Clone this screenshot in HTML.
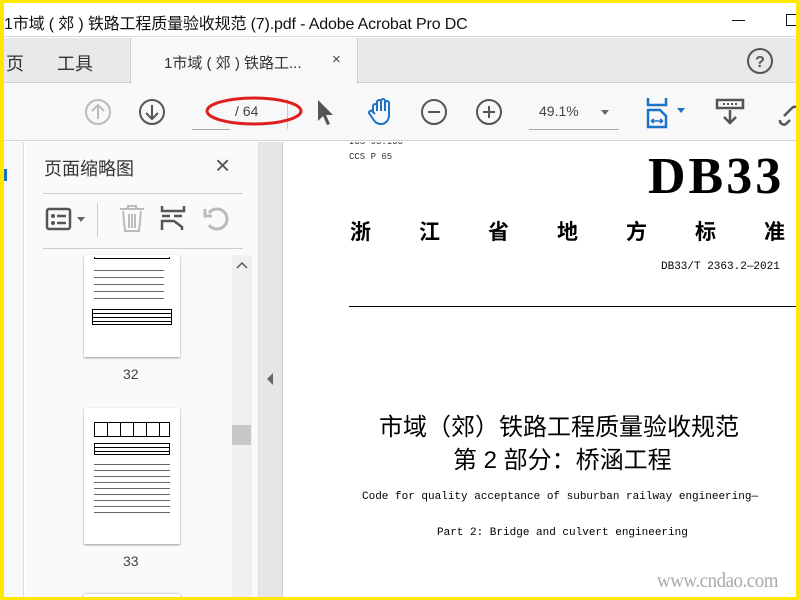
<!DOCTYPE html>
<html><head><meta charset="utf-8"><style>
*{margin:0;padding:0;box-sizing:border-box}
body{width:800px;height:600px;overflow:hidden;background:#ffe800;position:relative;font-family:"Liberation Sans","Noto Sans CJK SC",sans-serif}
.a{position:absolute}
.cjk{font-family:"Liberation Sans","Noto Sans CJK SC",sans-serif}
.mono{font-family:"Liberation Mono","Noto Sans CJK SC",monospace}
</style></head><body>
<div class="a" style="left:4px;top:3px;width:792px;height:594px;background:#fff;overflow:hidden">
 <div class="a" style="left:0;top:0;width:792px;height:34px;background:#fff;border-bottom:1px solid #d8d8d8"></div>
 <div class="a cjk" style="left:0;top:7px;font-size:16px;color:#111;white-space:nowrap;letter-spacing:-0.15px">1市域 ( 郊 ) 铁路工程质量验收规范 (7).pdf - Adobe Acrobat Pro DC</div>
 <div class="a" style="left:728px;top:17px;width:13px;height:1px;background:#111"></div>
 <div class="a" style="left:782px;top:11px;width:12px;height:12px;border:1px solid #111"></div>
 <div class="a" style="left:0;top:35px;width:792px;height:45px;background:#e9e9e9;border-bottom:1px solid #cfcfcf"></div>
 <div class="a cjk" style="left:2px;top:47px;font-size:18px;color:#333">页</div>
 <div class="a cjk" style="left:53px;top:47px;font-size:18px;color:#333">工具</div>
 <div class="a" style="left:126px;top:35px;width:228px;height:46px;background:#f8f8f8;border-left:1px solid #cfcfcf;border-right:1px solid #cfcfcf"></div>
 <div class="a cjk" style="left:160px;top:49px;font-size:15px;color:#333;white-space:nowrap">1市域 ( 郊 ) 铁路工...</div>
 <div class="a" style="left:328px;top:48px;font-size:15px;color:#444">×</div>
 <svg class="a" style="left:742px;top:44px" width="28" height="28"><circle cx="14" cy="14" r="12" fill="none" stroke="#555" stroke-width="2"/><text x="14" y="20" font-size="16" font-weight="bold" text-anchor="middle" fill="#555" font-family="Liberation Sans">?</text></svg>
 <div class="a" style="left:0;top:81px;width:792px;height:57px;background:#f8f8f8;border-bottom:1px solid #d4d4d4"></div>
 <svg class="a" style="left:80px;top:95px" width="28" height="28"><circle cx="14" cy="14" r="12" fill="none" stroke="#bbb" stroke-width="2"/><path d="M14 21V8M8 13l6-6 6 6" fill="none" stroke="#bbb" stroke-width="2"/></svg>
 <svg class="a" style="left:134px;top:95px" width="28" height="28"><circle cx="14" cy="14" r="12" fill="none" stroke="#555" stroke-width="2"/><path d="M14 7v13M8 15l6 6 6-6" fill="none" stroke="#555" stroke-width="2"/></svg>
 <div class="a" style="left:188px;top:126px;width:38px;height:1px;background:#aaa"></div>
 <div class="a" style="left:231px;top:100px;font-size:14px;color:#444">/ 64</div>
 <div class="a" style="left:283px;top:96px;width:1px;height:30px;background:#ccc"></div>
 <svg class="a" style="left:200px;top:88px" width="104" height="40"><ellipse cx="50" cy="20" rx="47" ry="13" fill="none" stroke="#e02020" stroke-width="3"/></svg>
 <svg class="a" style="left:310px;top:94px" width="22" height="30"><path d="M4 3v21l5-5 4 9 3-1-4-9h7z" fill="#555"/></svg>
 <svg class="a" style="left:362px;top:94px" width="30" height="30"><path d="M7 15V9a2 2 0 014 0v5V5a2 2 0 014 0v9V4a2 2 0 014 0v10V6a2 2 0 014 0v12c0 6-4 9-8 9s-6-2-8-5l-4-6a2 2 0 013-2l3 3" fill="none" stroke="#1a73c8" stroke-width="2"/></svg>
 <svg class="a" style="left:416px;top:95px" width="28" height="28"><circle cx="14" cy="14" r="12" fill="none" stroke="#555" stroke-width="2"/><path d="M8 14h12" stroke="#555" stroke-width="2"/></svg>
 <svg class="a" style="left:471px;top:95px" width="28" height="28"><circle cx="14" cy="14" r="12" fill="none" stroke="#555" stroke-width="2"/><path d="M8 14h12M14 8v12" stroke="#555" stroke-width="2"/></svg>
 <div class="a" style="left:535px;top:100px;font-size:14px;color:#444">49.1%</div>
 <div class="a" style="left:597px;top:107px;width:0;height:0;border-left:4px solid transparent;border-right:4px solid transparent;border-top:5px solid #666"></div>
 <div class="a" style="left:525px;top:126px;width:90px;height:1px;background:#aaa"></div>
 <svg class="a" style="left:642px;top:94px" width="42" height="32"><path d="M2 1v7h18V1M2 30V13h12l6 6v11z" fill="none" stroke="#1a73c8" stroke-width="2.5"/><path d="M5 24h12M5 24l3-2M5 24l3 2M17 24l-3-2M17 24l-3 2" stroke="#1a73c8" stroke-width="1.5"/><path d="M31 11h8l-4 5z" fill="#1a73c8"/></svg>
 <svg class="a" style="left:710px;top:95px" width="32" height="30"><rect x="3" y="2" width="26" height="8" fill="none" stroke="#555" stroke-width="2.5"/><path d="M9 6h2M13 6h2M17 6h2M21 6h2" stroke="#555" stroke-width="2"/><path d="M16 12v13M10 19l6 6 6-6" fill="none" stroke="#555" stroke-width="2.5"/></svg>
 <svg class="a" style="left:774px;top:95px" width="18" height="30"><path d="M6 18l8-8a4 4 0 016 6M2 22a4 4 0 006 4l4-4" fill="none" stroke="#555" stroke-width="2.5"/></svg>
 <div class="a" style="left:0;top:139px;width:20px;height:455px;background:#f8f8f8;border-right:1px solid #ddd"></div>
 <div class="a" style="left:0;top:166px;width:3px;height:12px;background:#1a73c8"></div>
 <div class="a" style="left:21px;top:139px;width:233px;height:455px;background:#fafafa"></div>
 <div class="a cjk" style="left:40px;top:152px;font-size:18px;color:#333">页面缩略图</div>
 <div class="a" style="left:211px;top:147px;font-size:26px;color:#555;line-height:30px">×</div>
 <div class="a" style="left:39px;top:190px;width:200px;height:1px;background:#ccc"></div>
 <svg class="a" style="left:41px;top:204px" width="48" height="26"><rect x="2" y="2" width="23" height="20" rx="2" fill="none" stroke="#555" stroke-width="2.5"/><circle cx="8" cy="9" r="2" fill="#555"/><circle cx="8" cy="16" r="2" fill="#555"/><path d="M12 9h9M12 16h9" stroke="#555" stroke-width="2.5"/><path d="M32 10h8l-4 5z" fill="#666"/></svg>
 <div class="a" style="left:93px;top:200px;width:1px;height:34px;background:#ccc"></div>
 <svg class="a" style="left:114px;top:200px" width="28" height="30"><path d="M2 6h24M10 6V3h8v3M5 8l2 20h14l2-20M11 11v14M14 11v14M17 11v14" fill="none" stroke="#bbb" stroke-width="2"/></svg>
 <svg class="a" style="left:156px;top:201px" width="28" height="28"><path d="M2 2v5h22V2M2 12h8M14 12h8M2 26V17h12l8 6v3" fill="none" stroke="#555" stroke-width="2.5"/></svg>
 <svg class="a" style="left:197px;top:202px" width="30" height="28"><path d="M8 20a10 10 0 100-12M4 4v7h7" fill="none" stroke="#bbb" stroke-width="3"/></svg>
 <div class="a" style="left:39px;top:245px;width:200px;height:1px;background:#ccc"></div>
 <div class="a" style="left:80px;top:252px;width:96px;height:102px;background:#fff;box-shadow:0 1px 2px #999;font-size:0">
  <div style="margin:2px 10px;height:2px;border:1px solid #000;border-top:0;width:76px"></div>
  <div style="margin:8px 10px 0;height:38px;background:repeating-linear-gradient(#fff 0 3px,#666 3px 4px,#fff 4px 7px);width:70px"></div>
  <div style="margin:4px 8px;height:16px;border:1.5px solid #000;background:repeating-linear-gradient(#fff 0 3px,#000 3px 4px)"></div>
 </div>
 <div class="a" style="left:119px;top:363px;font-size:14px;color:#444">32</div>
 <div class="a" style="left:80px;top:405px;width:96px;height:136px;background:#fff;box-shadow:0 1px 2px #999;font-size:0">
  <div style="margin:14px 10px 0;height:15px;border:1.5px solid #000;background:repeating-linear-gradient(90deg,#fff 0 12px,#000 12px 13px)"></div>
  <div style="margin:6px 10px 0;height:12px;border:1.5px solid #000;background:repeating-linear-gradient(#fff 0 3px,#000 3px 4px)"></div>
  <div style="margin:6px 10px 0;height:56px;background:repeating-linear-gradient(#fff 0 3px,#666 3px 4px,#fff 4px 6px)"></div>
 </div>
 <div class="a" style="left:119px;top:550px;font-size:14px;color:#444">33</div>
 <div class="a" style="left:80px;top:591px;width:96px;height:5px;background:#fff;box-shadow:0 0 2px #999"></div>
 <div class="a" style="left:228px;top:252px;width:20px;height:342px;background:#f0f0f0"></div>
 <svg class="a" style="left:232px;top:258px" width="12" height="10"><path d="M1 7l5-5 5 5" fill="none" stroke="#555" stroke-width="1.5"/></svg>
 <div class="a" style="left:228px;top:422px;width:19px;height:20px;background:#c8c8c8"></div>
 <div class="a" style="left:254px;top:139px;width:24px;height:455px;background:#e6e6e6;border-left:1px solid #ddd"></div>
 <div class="a" style="left:263px;top:370px;width:0;height:0;border-top:6px solid transparent;border-bottom:6px solid transparent;border-right:6px solid #666"></div>
 <div class="a" style="left:278px;top:139px;width:514px;height:455px;background:#fff;border-left:1px solid #d0d0d0;overflow:hidden">
  <div class="a mono" style="left:66px;top:-5px;font-size:9px;color:#333">ICS 93.100</div>
  <div class="a mono" style="left:66px;top:10px;font-size:9px;color:#333">CCS P 65</div>
  <div class="a" style="left:365px;top:5px;font-family:'Liberation Serif',serif;font-weight:bold;font-size:52px;color:#000;letter-spacing:3px">DB33</div>
  <div class="a cjk" style="left:67px;top:74px;font-size:21px;color:#000;font-weight:bold;white-space:nowrap"><span style="letter-spacing:48px">浙江省地方标准</span></div>
  <div class="a mono" style="left:378px;top:119px;font-size:11px;color:#000">DB33/T 2363.2—2021</div>
  <div class="a" style="left:66px;top:164px;width:460px;height:1px;background:#000"></div>
  <div class="a cjk" style="left:96px;top:265px;font-size:24px;color:#000;white-space:nowrap">市域（郊）铁路工程质量验收规范</div>
  <div class="a cjk" style="left:170px;top:298px;font-size:24px;color:#000;white-space:nowrap">第 2 部分：桥涵工程</div>
  <div class="a mono" style="left:79px;top:349px;font-size:11px;color:#000;white-space:nowrap">Code for quality acceptance of suburban railway engineering—</div>
  <div class="a mono" style="left:154px;top:385px;font-size:11px;color:#000;white-space:nowrap">Part 2: Bridge and culvert engineering</div>
  <div class="a" style="left:374px;top:426px;font-family:'Liberation Serif',serif;font-size:21px;color:#aaa;letter-spacing:-0.5px;transform:scaleX(0.9);transform-origin:left">www.cndao.com</div>
 </div>
</div>
</body></html>
